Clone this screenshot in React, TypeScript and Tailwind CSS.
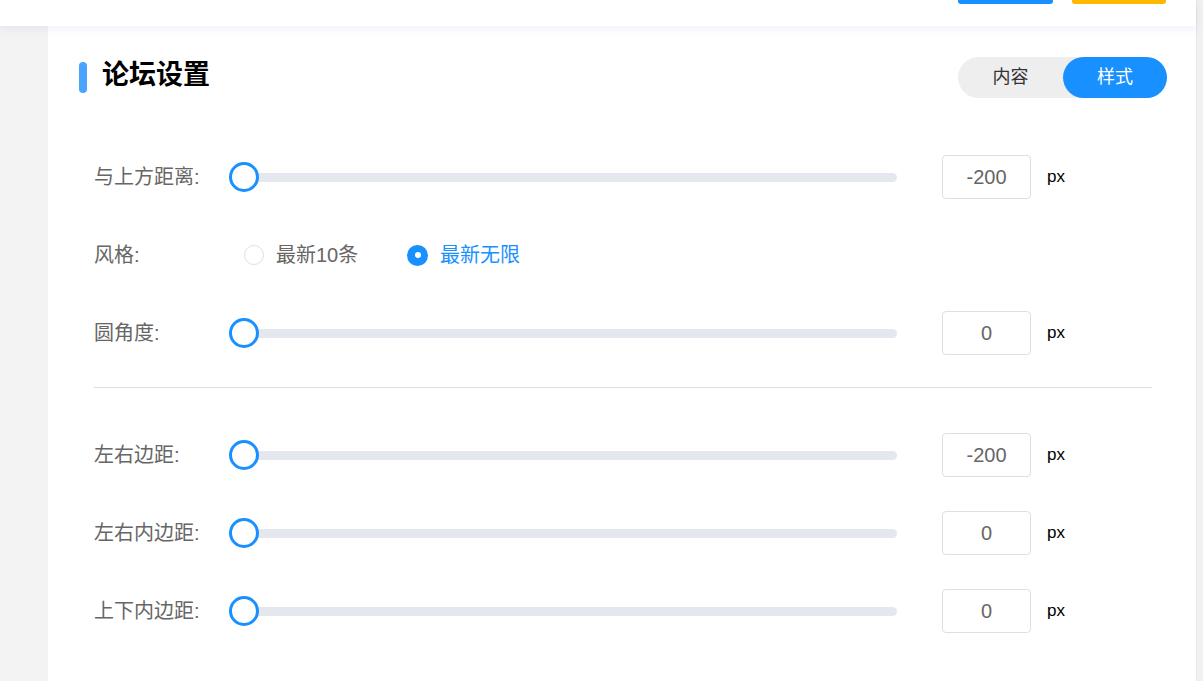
const font = { fontFamily: '"Liberation Sans", "Noto Sans CJK SC", sans-serif' };

function SliderRow({ label, value }: { label: string; value: string }) {
    return (
        <div className="flex items-center h-[44px]">
            <span className="w-[135px] text-[20px] text-[#666]">{label}</span>
            <div className="relative flex-1 h-[30px] flex items-center">
                <div className="absolute left-[15px] right-0 h-[9px] rounded-full bg-[#e4e7ed]" />
                <div className="relative w-[30px] h-[30px] rounded-full border-[3px] border-[#1890ff] bg-white" />
            </div>
            <div className="ml-[45px] w-[89px] h-[44px] rounded-[4px] border border-[#dcdfe6] flex items-center justify-center text-[20px] text-[#666]">
                {value}
            </div>
            <span className="ml-[16px] w-[105px] text-[17px] text-black">px</span>
        </div>
    );
}

export default function App() {
    return (
        <div className="w-[1203px] h-[681px] overflow-hidden flex bg-white" style={font}>
            <div className="flex-1 flex flex-col">
                <div className="relative z-10 h-[26px] bg-white shadow-[0_3px_8px_rgba(40,70,200,0.08)] flex justify-end items-start pr-[30px] gap-[19px]">
                    <div className="w-[95px] h-[4px] rounded-b-[3px] bg-[#1890ff]" />
                    <div className="w-[94px] h-[4px] rounded-b-[3px] bg-[#ffb800]" />
                </div>
                <div className="flex-1 flex">
                    <div className="w-[48px] bg-[#f3f3f3]" />
                    <div className="flex-1 bg-white pl-[31px] pr-[29px] pt-[31px]">
                        <div className="flex items-center justify-between h-[41px]">
                            <div className="flex items-center">
                                <div className="w-[8px] h-[31px] rounded-full bg-[#4aa3ff]" />
                                <h1 className="ml-[15px] mb-[4px] text-[27px] font-bold text-black leading-none">论坛设置</h1>
                            </div>
                            <div className="flex w-[209px] h-[41px] rounded-full bg-[#eeeeee] text-[18px]">
                                <div className="flex-1 flex items-center justify-center text-[#333]">内容</div>
                                <div className="w-[104px] flex items-center justify-center rounded-full bg-[#1890ff] text-white">样式</div>
                            </div>
                        </div>
                        <div className="pl-[15px] pr-[15px] mt-[57px]">
                            <div className="flex flex-col gap-[34px]">
                                <SliderRow label="与上方距离:" value="-200" />
                                <div className="flex items-center h-[44px]">
                                    <span className="w-[150px] text-[20px] text-[#666]">风格:</span>
                                    <div className="flex items-center w-[163px]">
                                        <div className="w-[20px] h-[20px] rounded-full border border-[#dcdfe6] bg-white" />
                                        <span className="ml-[12px] text-[20px] text-[#666]">最新10条</span>
                                    </div>
                                    <div className="flex items-center">
                                        <div className="w-[21px] h-[21px] rounded-full bg-[#1890ff] flex items-center justify-center">
                                            <div className="w-[6px] h-[6px] rounded-full bg-white" />
                                        </div>
                                        <span className="ml-[12px] text-[20px] text-[#1890ff]">最新无限</span>
                                    </div>
                                </div>
                                <SliderRow label="圆角度:" value="0" />
                            </div>
                            <div className="mt-[32px] h-px bg-[#dddddd]" />
                            <div className="flex flex-col gap-[34px] mt-[45px]">
                                <SliderRow label="左右边距:" value="-200" />
                                <SliderRow label="左右内边距:" value="0" />
                                <SliderRow label="上下内边距:" value="0" />
                            </div>
                        </div>
                    </div>
                </div>
            </div>
            <div className="w-[7px] bg-[#f1f1f1] border-l border-[#e6e6e6]" />
        </div>
    );
}
